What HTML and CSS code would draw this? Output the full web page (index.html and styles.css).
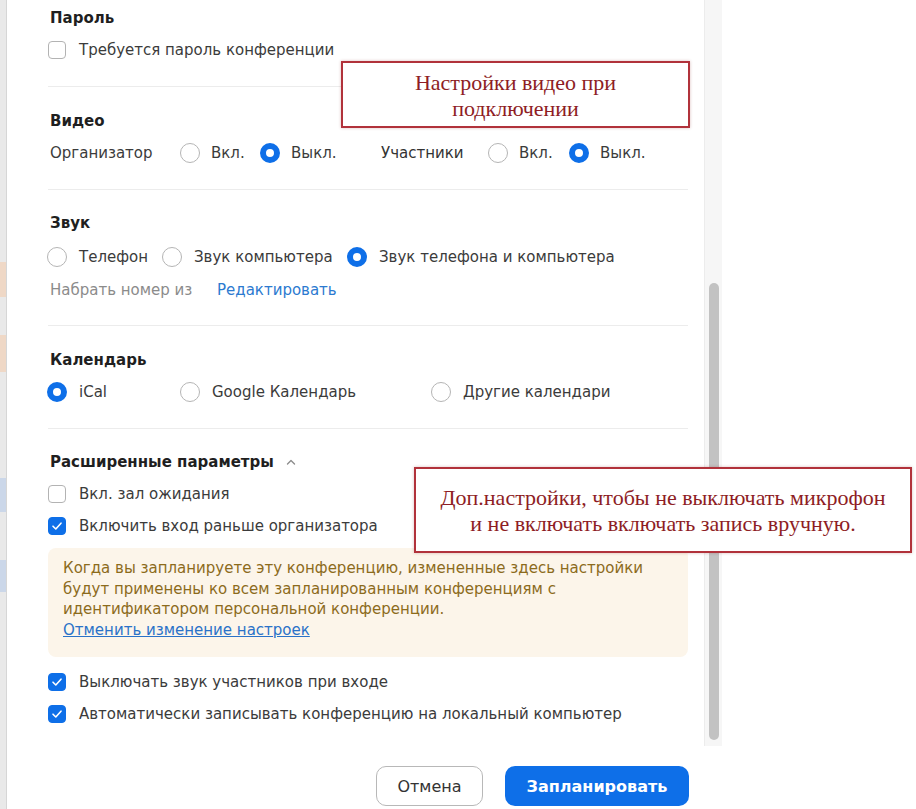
FILE: index.html
```html
<!DOCTYPE html>
<html lang="ru">
<head>
    <meta charset="UTF-8">
    <title>Запланировать конференцию</title>
    <link rel="stylesheet" href="styles.css">
</head>
<body>

<div class="desk">
    <div class="backstrip">
        <div class="chip chip-peach chip-1"></div>
        <div class="chip chip-peach chip-2"></div>
        <div class="chip chip-blue chip-3"></div>
        <div class="chip chip-blue chip-4"></div>
    </div>

    <div class="dialog">
        <div class="dialog-body">
            <div class="scroll-content">

                <div class="section first">
                    <div class="title">Пароль</div>
                    <label class="row">
                        <span class="checkbox"></span>
                        <span>Требуется пароль конференции</span>
                    </label>
                </div>

                <div class="section video">
                    <div class="title">Видео</div>
                    <div class="row video-row">
                        <span class="video-label host">Организатор</span>
                        <span class="option opt-on"><span class="radio"></span>Вкл.</span>
                        <span class="option opt-off"><span class="radio on"></span>Выкл.</span>
                        <span class="video-label participants">Участники</span>
                        <span class="option opt-on2"><span class="radio"></span>Вкл.</span>
                        <span class="option"><span class="radio on"></span>Выкл.</span>
                    </div>
                </div>

                <div class="section sound">
                    <div class="title">Звук</div>
                    <div class="row sound-row">
                        <span class="option"><span class="radio"></span>Телефон</span>
                        <span class="option"><span class="radio"></span>Звук компьютера</span>
                        <span class="option"><span class="radio on"></span>Звук телефона и компьютера</span>
                    </div>
                    <div class="row dial-row">
                        <span class="muted">Набрать номер из</span>
                        <a class="link" href="#">Редактировать</a>
                    </div>
                </div>

                <div class="section calendar">
                    <div class="title">Календарь</div>
                    <div class="row calendar-row">
                        <span class="option"><span class="radio on"></span>iCal</span>
                        <span class="option"><span class="radio"></span>Google Календарь</span>
                        <span class="option"><span class="radio"></span>Другие календари</span>
                    </div>
                </div>

                <div class="section last">
                    <div class="title">Расширенные параметры
                        <svg class="chevron" width="10" height="6" viewBox="0 0 10 6"><path d="M1.5 5 L5 1.5 L8.5 5" fill="none" stroke="#8d8d8d" stroke-width="1.4" stroke-linecap="round" stroke-linejoin="round"/></svg>
                    </div>
                    <label class="row">
                        <span class="checkbox"></span>
                        <span>Вкл. зал ожидания</span>
                    </label>
                    <label class="row">
                        <span class="checkbox checked"><svg width="12" height="10" viewBox="0 0 12 10"><path d="M2 5.2 L4.8 8 L10 2.2" fill="none" stroke="#fff" stroke-width="1.6" stroke-linecap="round" stroke-linejoin="round"/></svg></span>
                        <span>Включить вход раньше организатора</span>
                    </label>
                    <div class="notice">
                        Когда вы запланируете эту конференцию, измененные здесь настройки
                        будут применены ко всем запланированным конференциям с
                        идентификатором персональной конференции.<br>
                        <a class="notice-link" href="#">Отменить изменение настроек</a>
                    </div>
                    <label class="row after-notice">
                        <span class="checkbox checked"><svg width="12" height="10" viewBox="0 0 12 10"><path d="M2 5.2 L4.8 8 L10 2.2" fill="none" stroke="#fff" stroke-width="1.6" stroke-linecap="round" stroke-linejoin="round"/></svg></span>
                        <span>Выключать звук участников при входе</span>
                    </label>
                    <label class="row">
                        <span class="checkbox checked"><svg width="12" height="10" viewBox="0 0 12 10"><path d="M2 5.2 L4.8 8 L10 2.2" fill="none" stroke="#fff" stroke-width="1.6" stroke-linecap="round" stroke-linejoin="round"/></svg></span>
                        <span>Автоматически записывать конференцию на локальный компьютер</span>
                    </label>
                </div>

            </div>
            <div class="scrollbar">
                <div class="thumb"></div>
            </div>
        </div>

        <div class="footer">
            <button class="btn btn-cancel">Отмена</button>
            <button class="btn btn-primary">Запланировать</button>
        </div>
    </div>
</div>

<div class="note note-video">Настройки видео при<br>подключении</div>
<div class="note note-advanced">Доп.настройки, чтобы не выключать микрофон<br>и не включать включать запись вручную.</div>

</body>
</html>
```

FILE: styles.css
```css
body {
    margin: 0;
    background: #fff;
    font-family: "DejaVu Sans", "Liberation Sans", sans-serif;
    font-size: 15px;
    color: #3b3b3b;
    position: relative;
    height: 809px;
    overflow: hidden;
}
.desk {
    display: flex;
    height: 809px;
}
.backstrip {
    width: 6px;
    background: #e9e9e9;
    border-right: 1px solid #d6d6d6;
    display: flex;
    flex-direction: column;
}
.chip {
    width: 6px;
}
.chip-peach {
    background: #efd8c6;
}
.chip-blue {
    background: #cbd7e9;
}
.chip-1 { margin-top: 262px; height: 35px; }
.chip-2 { margin-top: 38px; height: 37px; }
.chip-3 { margin-top: 106px; height: 34px; }
.chip-4 { margin-top: 48px; height: 32px; }

.dialog {
    width: 715px;
    display: flex;
    flex-direction: column;
}
.dialog-body {
    display: flex;
    height: 746px;
}
.scroll-content {
    flex: 1;
    padding: 8px 16px 0 41px;
}
.scrollbar {
    width: 17px;
    background: #f6f6f6;
    border-left: 1px solid #ececec;
    display: flex;
    flex-direction: column;
}
.thumb {
    margin: 283px 0 0 4px;
    width: 10px;
    height: 457px;
    background: #c2c2c2;
    border-radius: 5px;
}

.section {
    display: flex;
    flex-direction: column;
    gap: 12px;
    padding: 23px 0 26px;
    border-bottom: 1px solid #ececec;
}
.section.first {
    padding-top: 0;
}
.section.video {
    padding-top: 24px;
}
.section.sound {
    gap: 13px;
    padding-bottom: 25px;
}
.section.sound .title {
    margin-bottom: 1px;
}
.section.calendar {
    padding-top: 24px;
    padding-bottom: 26px;
}
.section.last {
    border-bottom: none;
    padding-top: 23px;
}
.title {
    font-weight: bold;
    color: #1f1f1f;
    line-height: 20px;
    padding-left: 2px;
    display: flex;
    align-items: center;
}
.chevron {
    margin-left: 12px;
}
.row {
    display: flex;
    align-items: center;
    line-height: 20px;
    height: 20px;
    white-space: nowrap;
}
.checkbox {
    width: 16px;
    height: 16px;
    border: 1px solid #b3b3b3;
    border-radius: 4px;
    margin-right: 13px;
    background: #fff;
    display: flex;
    align-items: center;
    justify-content: center;
}
.checkbox.checked {
    background: #0e6fe8;
    border-color: #0e6fe8;
}
.option {
    display: flex;
    align-items: center;
}
.radio {
    width: 18px;
    height: 18px;
    border: 1px solid #b5b5b5;
    border-radius: 50%;
    margin-right: 12px;
    box-sizing: content-box;
    flex-shrink: 0;
}
.radio.on {
    width: 8px;
    height: 8px;
    border: 6px solid #0e6fe8;
}

.video-row .radio {
    margin-right: 11px;
}
.video-row .host {
    width: 132px;
    padding-left: 2px;
    box-sizing: border-box;
}
.video-row .opt-on {
    width: 80px;
}
.video-row .opt-off {
    width: 121px;
}
.video-row .participants {
    width: 107px;
    color: #333;
}
.video-row .opt-on2 {
    width: 81px;
}
.sound-row {
    display: grid;
    grid-template-columns: 115px 185px auto;
    margin-left: -1px;
}
.dial-row {
    padding-left: 2px;
}
.muted {
    color: #8b8b8b;
    width: 167px;
}
.link {
    color: #2c7ad0;
    text-decoration: none;
}
.calendar-row {
    display: grid;
    grid-template-columns: 133px 251px auto;
    margin-left: -1px;
}

.notice {
    background: #fcf5ea;
    border-radius: 8px;
    padding: 10px 15px 17px;
    line-height: 20.5px;
    color: #8c6b1c;
}
.notice-link {
    color: #2a72c8;
    text-decoration: underline;
}
.after-notice {
    margin-top: 3px;
}

.footer {
    flex: 1;
    display: flex;
    justify-content: flex-end;
    align-items: flex-start;
    gap: 22px;
    padding: 20px 33px 0 0;
}
.btn {
    height: 40px;
    border-radius: 10px;
    font-family: "DejaVu Sans", "Liberation Sans", sans-serif;
    font-size: 16px;
    cursor: pointer;
}
.btn-cancel {
    width: 107px;
    background: #fff;
    border: 1px solid #b8b8b8;
    color: #333;
}
.btn-primary {
    width: 184px;
    background: #0e6fe8;
    border: none;
    color: #fff;
    font-weight: bold;
}

.note {
    position: absolute;
    background: #fff;
    border: 2px solid #b1323b;
    box-shadow: 0 0 3px rgba(120, 0, 0, 0.25);
    font-family: "Liberation Serif", "Times New Roman", serif;
    font-size: 22px;
    line-height: 26px;
    color: #8e1d24;
    text-align: center;
    box-sizing: border-box;
    white-space: nowrap;
}
.note-video {
    left: 341px;
    top: 61px;
    width: 349px;
    height: 67px;
    padding-top: 7px;
}
.note-advanced {
    left: 414px;
    top: 467px;
    width: 498px;
    height: 86px;
    padding-top: 16px;
}
```
